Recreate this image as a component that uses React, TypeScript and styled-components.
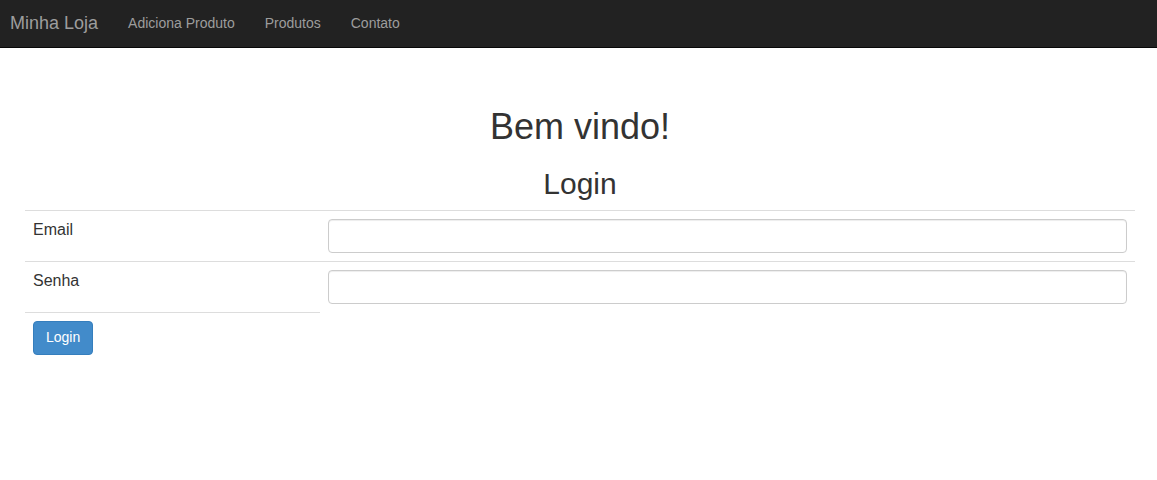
import React from "react";
import styled, { createGlobalStyle } from "styled-components";

const Global = createGlobalStyle`
  html, body { margin: 0; padding: 0; background: #fff; }
  body {
    font-family: "Liberation Sans", Arial, Helvetica, sans-serif;
    font-size: 14px;
    line-height: 1.42857;
    color: #333;
  }
  * { box-sizing: border-box; }
`;

const Navbar = styled.nav`
  height: 48px;
  padding-bottom: 2px;
  background: #222;
  border-bottom: 1px solid #080808;
  display: flex;
  align-items: center;
`;

const Brand = styled.a`
  font-size: 18px;
  line-height: 20px;
  color: #9d9d9d;
  padding: 0 15px 0 10px;
  text-decoration: none;
`;

const NavList = styled.ul`
  list-style: none;
  margin: 0;
  padding: 0;
  display: flex;
`;

const NavLink = styled.a`
  display: block;
  padding: 0 15px;
  font-size: 14px;
  line-height: 20px;
  color: #9d9d9d;
  text-decoration: none;
`;

const Main = styled.main`
  padding: 0 22px 0 25px;
`;

const Title = styled.h1`
  margin: 59px 0 0;
  font-size: 36px;
  font-weight: 500;
  line-height: 1.1;
  text-align: center;
  color: #333;
`;

const Subtitle = styled.h2`
  margin: 20px 0 10px;
  font-size: 30px;
  font-weight: 500;
  line-height: 1.1;
  text-align: center;
  color: #333;
`;

const Table = styled.table`
  width: 1110px;
  border-collapse: collapse;
  border-spacing: 0;
`;

const Row = styled.tr<{ $h?: number }>`
  height: ${(p) => (p.$h ? `${p.$h}px` : "auto")};
`;

const Cell = styled.td<{ $label?: boolean }>`
  padding: 8px;
  border-top: 1px solid #ddd;
  vertical-align: top;
  font-size: 16px;
  line-height: 1.42857;
  width: ${(p) => (p.$label ? "295px" : "auto")};
`;

const Input = styled.input`
  display: block;
  width: 100%;
  height: 34px;
  padding: 6px 12px;
  font-size: 14px;
  font-family: inherit;
  color: #555;
  background: #fff;
  border: 1px solid #ccc;
  border-radius: 4px;
  box-shadow: inset 0 1px 1px rgba(0, 0, 0, 0.075);
  outline: none;
`;

const Button = styled.button`
  display: inline-block;
  height: 34px;
  padding: 6px 12px;
  font-family: inherit;
  font-size: 14px;
  line-height: 1.42857;
  color: #fff;
  background: #428bca;
  border: 1px solid #357ebd;
  border-radius: 4px;
  cursor: pointer;
`;

export default function App() {
  return (
    <>
      <Global />
      <Navbar>
        <Brand href="#">Minha Loja</Brand>
        <NavList>
          <li><NavLink href="#">Adiciona Produto</NavLink></li>
          <li><NavLink href="#">Produtos</NavLink></li>
          <li><NavLink href="#">Contato</NavLink></li>
        </NavList>
      </Navbar>
      <Main>
        <Title>Bem vindo!</Title>
        <Subtitle>Login</Subtitle>
        <form onSubmit={(e) => e.preventDefault()}>
          <Table>
            <tbody>
              <Row $h={51}>
                <Cell $label>Email</Cell>
                <Cell><Input type="text" /></Cell>
              </Row>
              <Row $h={51}>
                <Cell $label>Senha</Cell>
                <Cell><Input type="password" /></Cell>
              </Row>
              <Row>
                <Cell $label><Button type="submit">Login</Button></Cell>
              </Row>
            </tbody>
          </Table>
        </form>
      </Main>
    </>
  );
}
